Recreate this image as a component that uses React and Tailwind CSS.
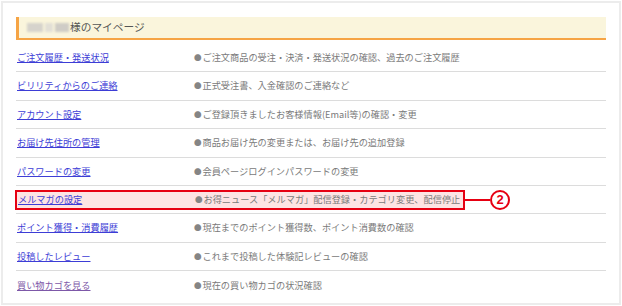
import React from 'react';

const rows = [
  { label: 'ご注文履歴・発送状況', desc: 'ご注文商品の受注・決済・発送状況の確認、過去のご注文履歴' },
  { label: 'ビリリティからのご連絡', desc: '正式受注書、入金確認のご連絡など' },
  { label: 'アカウント設定', desc: 'ご登録頂きましたお客様情報(Email等)の確認・変更' },
  { label: 'お届け先住所の管理', desc: '商品お届け先の変更または、お届け先の追加登録' },
  { label: 'パスワードの変更', desc: '会員ページログインパスワードの変更' },
  { label: 'メルマガの設定', desc: 'お得ニュース「メルマガ」配信登録・カテゴリ変更、配信停止', mark: true },
  { label: 'ポイント獲得・消費履歴', desc: '現在までのポイント獲得数、ポイント消費数の確認' },
  { label: '投稿したレビュー', desc: 'これまで投稿した体験記レビューの確認' },
  { label: '買い物カゴを見る', desc: '現在の買い物カゴの状況確認', visited: true },
];

function Cells({ row }) {
  return (
    <>
      <div className="w-[178px] shrink-0 pl-[1px]">
        <a
          href="#"
          className={`underline underline-offset-[1px] ${row.visited ? 'text-[#7d58a8]' : 'text-[#3d3dd6]'}`}
        >
          {row.label}
        </a>
      </div>
      <div className="text-[#7a7a7a] whitespace-nowrap flex items-center">
        <span className="text-[#858585] text-[7.5px] mr-[1px]">●</span>
        {row.desc}
      </div>
    </>
  );
}

export default function App() {
  return (
    <div className="w-[622px] h-[306px] bg-white p-[1px] font-['Noto_Sans_CJK_JP',sans-serif]">
      <div className="h-[304px] w-[620px] border-2 border-[#ececec] pl-[13px] pt-[14px]">
        {/* header */}
        <div className="w-[590px] h-[23px] bg-[#faf5dc] border-l-[3px] border-b-2 border-[#f6a445] flex items-center pl-[8px] text-[10.7px] text-[#555]">
          <span className="flex items-center gap-[2px] mr-[1px]">
            <span className="w-[16px] h-[9px] bg-[#d6d3cc] blur-[1px]" />
            <span className="w-[8px] h-[9px] bg-[#e2dfd6] blur-[1px]" />
            <span className="w-[14px] h-[9px] bg-[#cfccc6] blur-[1px]" />
          </span>
          様のマイページ
        </div>

        {/* menu rows */}
        <div className="mt-[4px] w-[590px] text-[9.2px] leading-none">
          {rows.map((row, i) => (
            <div
              key={row.label}
              className={`h-[28.4px] flex items-center ${i < rows.length - 1 ? 'border-b border-[#dcdcdc]' : ''}`}
            >
              {row.mark ? (
                <>
                  <div className="w-[450px] h-[20px] border-2 border-[#e60012] bg-[#fde4e4] flex items-center -ml-[1px]">
                    <Cells row={row} />
                  </div>
                  <div className="w-[25px] h-[2px] bg-[#e60012]" />
                  <div className="w-[20px] h-[20px] rounded-full border-2 border-[#e60012] flex items-center justify-center text-[#e60012] text-[13px] font-bold font-['Liberation_Sans',sans-serif]">
                    2
                  </div>
                </>
              ) : (
                <Cells row={row} />
              )}
            </div>
          ))}
        </div>
      </div>
    </div>
  );
}
